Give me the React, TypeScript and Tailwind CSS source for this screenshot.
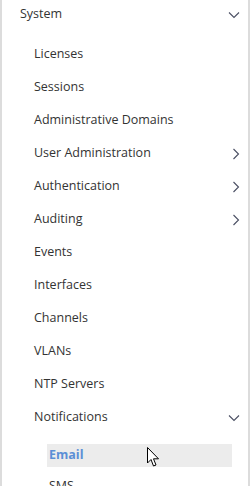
import React from "react"

const items = [
  { label: "Licenses" },
  { label: "Sessions" },
  { label: "Administrative Domains" },
  { label: "User Administration", arrow: "right" },
  { label: "Authentication", arrow: "right" },
  { label: "Auditing", arrow: "right" },
  { label: "Events" },
  { label: "Interfaces" },
  { label: "Channels" },
  { label: "VLANs" },
  { label: "NTP Servers" },
  { label: "Notifications", arrow: "down" },
]

function Chevron({ dir }: { dir: string }) {
  if (dir === "down") {
    return (
      <svg width="12" height="8" viewBox="0 0 12 8" className="text-[#4a4f63]">
        <path d="M1 1.5 L6 6.5 L11 1.5" fill="none" stroke="currentColor" strokeWidth="1.1" />
      </svg>
    )
  }
  return (
    <svg width="8" height="12" viewBox="0 0 8 12" className="text-[#4a4f63]">
      <path d="M1.5 1 L6.5 6 L1.5 11" fill="none" stroke="currentColor" strokeWidth="1.1" />
    </svg>
  )
}

export default function App() {
  return (
    <div className="h-[486px] w-[251px] overflow-hidden bg-white">
      <div
        className="relative h-full w-[250px] border-l-2 border-r-2 border-[#dcdcdc] pt-[1px] text-[12.5px] text-[#333]"
        style={{ fontFamily: "'Open Sans', 'Noto Sans', sans-serif" }}
      >
        <div className="flex h-[27px] items-center justify-between pl-[18px] pr-[8px]">
          <span>System</span>
          <Chevron dir="down" />
        </div>

        <div className="pt-[10px]">
          {items.map(item => (
            <div
              key={item.label}
              className="flex h-[33px] items-center justify-between pl-[32px] pr-[8px]"
            >
              <span>{item.label}</span>
              {item.arrow && <Chevron dir={item.arrow} />}
            </div>
          ))}
        </div>

        <div className="mt-[10px] ml-[45px] mr-[16px] flex h-[23px] items-center bg-[#ececec] pl-[2px]">
          <span className="font-bold text-[#5b8fd6]">Email</span>
        </div>

        <div className="mt-[10px] pl-[47px]">
          <span>SMS</span>
        </div>

        <svg
          className="absolute left-[145px] top-[447px]"
          width="13"
          height="21"
          viewBox="0 0 13 21"
        >
          <path
            d="M0.5 0.5 L0.5 16 L4 12.5 L6.5 19 L9 18 L6.5 11.8 L11.5 11.8 Z"
            fill="white"
            stroke="black"
            strokeWidth="1"
          />
        </svg>
      </div>
    </div>
  )
}
